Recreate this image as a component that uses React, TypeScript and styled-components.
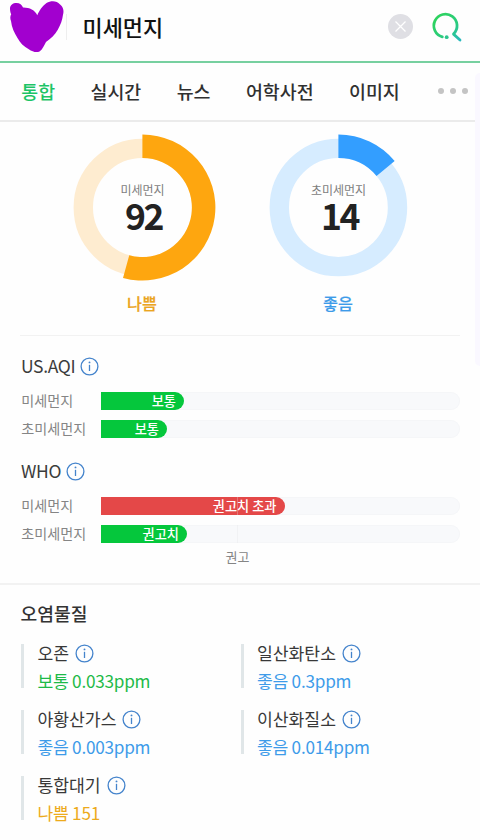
import React from "react";
import styled, { createGlobalStyle } from "styled-components";

const GlobalStyle = createGlobalStyle`
  * { box-sizing: border-box; }
  body {
    margin: 0;
    background: #fefefe;
    color: #3c3c3c;
    font-family: "Noto Sans CJK KR", sans-serif;
  }
`;

const Page = styled.main`
  position: relative;
  width: 480px;
  height: 840px;
  overflow: hidden;
  display: flex;
  flex-direction: column;
  background: #fefefe;
`;

const ScrollHandle = styled.div`
  position: absolute;
  top: 73px;
  right: 0;
  width: 5px;
  height: 293px;
  border-radius: 5px 0 0 5px;
  background: #faf8ff;
`;

const SearchBar = styled.header`
  flex: none;
  display: flex;
  align-items: center;
  height: 63px;
  padding: 0 17px 8px 9px;
  border-bottom: 2px solid #77d0a0;
`;

const HeartIcon = styled.svg`
  flex: none;
  width: 56px;
  height: 53px;
`;

const BarSeparator = styled.span`
  width: 1px;
  height: 26px;
  margin-left: 1px;
  background: #eeeeee;
`;

const Query = styled.h1`
  flex: 1;
  margin: 1px 0 0 15.5px;
  font-size: 21.9px;
  line-height: 32px;
  font-weight: 500;
  color: #111;
`;

const ClearButton = styled.button`
  width: 25px;
  height: 25px;
  padding: 0;
  border: 0;
  border-radius: 50%;
  background: #dfdfe4;
  svg { display: block; }
`;

const SearchButton = styled.button`
  width: 32px;
  height: 32px;
  margin-left: 18.5px;
  padding: 0;
  border: 0;
  background: none;
  svg { display: block; }
`;

const Tabs = styled.nav`
  flex: none;
  display: flex;
  align-items: center;
  gap: 35.4px;
  height: 59px;
  padding: 0 12.5px 2px 21.3px;
  border-bottom: 2px solid #ebebeb;
`;

const Tab = styled.a<{ $active?: boolean }>`
  font-size: 18.4px;
  line-height: 28px;
  font-weight: 500;
  white-space: nowrap;
  color: ${(p) => (p.$active ? "#1cc466" : "#303030")};
`;

const MoreDots = styled.span`
  display: flex;
  gap: 6px;
  margin-left: auto;
  i {
    width: 6px;
    height: 6px;
    border-radius: 50%;
    background: #c4c4c4;
  }
`;

const Gauges = styled.section`
  flex: none;
  display: flex;
  gap: 50px;
  height: 213px;
  padding: 12px 0 0 69px;
`;

const GaugeCard = styled.figure`
  display: flex;
  flex-direction: column;
  align-items: center;
  width: 146px;
  margin: 0;
`;

const GaugeFace = styled.div`
  display: grid;
  width: 146px;
  height: 147px;
  > * { grid-area: 1 / 1; }
`;

const GaugeText = styled.div`
  display: flex;
  flex-direction: column;
  align-items: center;
  padding-top: 47px;
`;

const GaugeName = styled.span`
  font-size: 12px;
  line-height: 18px;
  color: #7d7d7d;
`;

const GaugeValue = styled.strong`
  margin: -2px -2px 0 0;
  font-size: 35.5px;
  line-height: 36px;
  font-weight: 700;
  letter-spacing: -2.4px;
  color: #222;
`;

const GaugeGrade = styled.figcaption<{ $color: string }>`
  margin-top: 9px;
  font-size: 16.2px;
  line-height: 26px;
  font-weight: 500;
  -webkit-text-stroke: 0.2px ${(p) => p.$color};
  color: ${(p) => p.$color};
`;

const Indexes = styled.section`
  flex: none;
  height: 248px;
  margin: 0 20px;
  padding-top: 16px;
  border-top: 1px solid #f2f2f2;
`;

const IndexGroup = styled.div`
  height: 105px;
`;

const IndexTitle = styled.h2`
  display: flex;
  align-items: center;
  gap: 5px;
  height: 28px;
  margin: 0 0 12px 1px;
  font-size: 17.5px;
  font-weight: 400;
  line-height: 28px;
  letter-spacing: -0.35px;
  color: #3c3c3c;
`;

const IndexRow = styled.div`
  display: flex;
  align-items: center;
  height: 18px;
  margin-bottom: 10px;
`;

const RowLabel = styled.span`
  width: 81px;
  margin-top: -2px;
  padding-left: 1.3px;
  font-size: 14.1px;
  line-height: 18px;
  color: #858585;
  white-space: nowrap;
`;

const Track = styled.div<{ $guide?: boolean }>`
  position: relative;
  flex: 1;
  height: 18px;
  border-radius: 0 9px 9px 0;
  background: #f8f9fb;
  box-shadow: inset 0 0 0 1px #f5f6f8;
  &::after {
    content: "";
    display: ${(p) => (p.$guide ? "block" : "none")};
    position: absolute;
    top: 0;
    left: 136px;
    width: 1px;
    height: 18px;
    background: rgba(225, 225, 230, 0.3);
  }
`;

const Fill = styled.div<{ $width: number; $color: string }>`
  display: flex;
  align-items: center;
  justify-content: flex-end;
  width: ${(p) => p.$width}px;
  height: 18px;
  padding: 0 8px 1px 0;
  border-radius: 0 9px 9px 0;
  background: ${(p) => p.$color};
  color: #fff;
  font-size: 13.2px;
  line-height: 17px;
  font-weight: 500;
`;

const Guide = styled.div`
  width: 435px;
  margin-top: -15px;
  text-align: center;
  font-size: 13px;
  line-height: 20px;
  color: #858585;
`;

const Pollutants = styled.section`
  padding: 15px 20px 0 20.5px;
  border-top: 2px solid #f2f2f2;
`;

const PollutantsTitle = styled.h2`
  margin: 0 0 18px;
  font-size: 18.2px;
  line-height: 26px;
  font-weight: 500;
  color: #333;
`;

const PollutantGrid = styled.div`
  display: grid;
  grid-template-columns: 219.5px 1fr;
  row-gap: 22px;
  padding-left: 0.5px;
`;

const Pollutant = styled.div`
  height: 44px;
  padding-left: 13.4px;
  border-left: 3px solid #e0e6e8;
`;

const PollutantName = styled.div`
  display: flex;
  align-items: center;
  gap: 6px;
  height: 18px;
  margin-bottom: 9px;
  font-size: 17.2px;
  line-height: 18px;
  color: #383838;
`;

const PollutantValue = styled.div<{ $color: string }>`
  font-size: 17.2px;
  line-height: 20px;
  letter-spacing: -0.25px;
  color: ${(p) => p.$color};
`;

const InfoSvg = styled.svg`
  flex: none;
  display: block;
  width: 19px;
  height: 19px;
`;

const InfoIcon = () => (
  <InfoSvg viewBox="0 0 19 19">
    <circle cx="9.5" cy="9.5" r="8.4" fill="none" stroke="#4584cc" strokeWidth="1.3" />
    <circle cx="9.5" cy="5.4" r="0.95" fill="#4584cc" />
    <path d="M9.5 7.8V14" stroke="#4584cc" strokeWidth="1.3" />
  </InfoSvg>
);

interface GaugeProps {
  name: string;
  value: number;
  grade: string;
  sweep: number;
  color: string;
  pale: string;
  gradeColor: string;
}

const CX = 73.4;
const CY = 73.5;
const OUTER = 73;
const INNER = 49.5;

const point = (r: number, deg: number) => {
  const a = (deg * Math.PI) / 180;
  return `${(CX + r * Math.sin(a)).toFixed(2)} ${(CY - r * Math.cos(a)).toFixed(2)}`;
};

const sector = (sweep: number) => {
  const large = sweep > 180 ? 1 : 0;
  return `M${point(OUTER, 0)}A${OUTER} ${OUTER} 0 ${large} 1 ${point(OUTER, sweep)}L${point(INNER, sweep)}A${INNER} ${INNER} 0 ${large} 0 ${point(INNER, 0)}Z`;
};

const Gauge = ({ name, value, grade, sweep, color, pale, gradeColor }: GaugeProps) => (
  <GaugeCard>
    <GaugeFace>
      <svg width="147" height="147" viewBox="0 0 147 147">
        <circle cx={CX} cy={CY} r="59.1" fill="none" stroke={pale} strokeWidth="19.4" />
        <path d={sector(sweep)} fill={color} />
      </svg>
      <GaugeText>
        <GaugeName>{name}</GaugeName>
        <GaugeValue>{value}</GaugeValue>
      </GaugeText>
    </GaugeFace>
    <GaugeGrade $color={gradeColor}>{grade}</GaugeGrade>
  </GaugeCard>
);

interface BarProps {
  label: string;
  text: string;
  width: number;
  color: string;
  guide?: boolean;
}

const Bar = ({ label, text, width, color, guide }: BarProps) => (
  <IndexRow>
    <RowLabel>{label}</RowLabel>
    <Track $guide={guide}>
      <Fill $width={width} $color={color}>{text}</Fill>
    </Track>
  </IndexRow>
);

const GREEN = "#05c73c";
const RED = "#e44848";
const BLUE = "#3d9be9";

const pollutants = [
  { name: "오존", value: "보통 0.033ppm", color: "#1dba48" },
  { name: "일산화탄소", value: "좋음 0.3ppm", color: BLUE },
  { name: "아황산가스", value: "좋음 0.003ppm", color: BLUE },
  { name: "이산화질소", value: "좋음 0.014ppm", color: BLUE },
  { name: "통합대기", value: "나쁨 151", color: "#edaa1c" },
];

export default function App() {
  return (
    <>
      <GlobalStyle />
      <Page>
        <SearchBar>
          <HeartIcon viewBox="0 0 56 53">
            <path
              fill="#a200cf"
              d="M1 8.5C1 5 4 3 7.5 3C10.8 3 13 4.8 14 7.5C20 7.3 26 10 28.3 15.2C30 11 33.5 5.8 37.5 3C42 .5 48 .7 50.8 4.3C54 6.8 55.3 10.5 54 14.8C53.4 20 51.5 25 48.8 29.8C46 35 42 38.5 37 42C35 45.5 33.6 49.5 30.5 51.5C27 53 23.3 51.4 19.8 49.2C15 46.8 10.8 42.5 8.5 38C5.3 33 2.6 27 2 21C1 18.5 1.1 16.2 2.2 14.2C1.4 12.7 1 10.6 1 8.5Z"
            />
          </HeartIcon>
          <BarSeparator />
          <Query>미세먼지</Query>
          <ClearButton aria-label="지우기">
            <svg width="25" height="25" viewBox="0 0 25 25">
              <path d="M7.5 7.5L17.5 17.5M17.5 7.5L7.5 17.5" stroke="#fff" strokeWidth="1.3" />
            </svg>
          </ClearButton>
          <SearchButton aria-label="검색">
            <svg width="32" height="32" viewBox="0 0 32 32" fill="none">
              <defs>
                <linearGradient id="lens" gradientUnits="userSpaceOnUse" x1="5" y1="5" x2="29" y2="29">
                  <stop offset="0" stopColor="#2dd35c" />
                  <stop offset="0.6" stopColor="#2bcb80" />
                  <stop offset="1" stopColor="#29b9bd" />
                </linearGradient>
              </defs>
              <path
                d="M11.3 25.9A11.6 11.6 0 1 1 22.5 23.1L29 29"
                stroke="url(#lens)"
                strokeWidth="2.8"
                strokeLinejoin="round"
                strokeLinecap="round"
              />
              <circle cx="15.7" cy="26.2" r="1.9" fill="#2bc58d" />
            </svg>
          </SearchButton>
        </SearchBar>

        <Tabs>
          <Tab $active>통합</Tab>
          <Tab>실시간</Tab>
          <Tab>뉴스</Tab>
          <Tab>어학사전</Tab>
          <Tab>이미지</Tab>
          <MoreDots><i /><i /><i /></MoreDots>
        </Tabs>

        <Gauges>
          <Gauge name="미세먼지" value={92} grade="나쁨" sweep={195.4} color="#fea60f" pale="#feecd0" gradeColor="#eba51f" />
          <Gauge name="초미세먼지" value={14} grade="좋음" sweep={50.4} color="#339eff" pale="#d6ecff" gradeColor="#3d9be9" />
        </Gauges>

        <Indexes>
          <IndexGroup>
            <IndexTitle>US.AQI <InfoIcon /></IndexTitle>
            <Bar label="미세먼지" text="보통" width={83} color={GREEN} />
            <Bar label="초미세먼지" text="보통" width={66} color={GREEN} />
          </IndexGroup>
          <IndexGroup>
            <IndexTitle>WHO <InfoIcon /></IndexTitle>
            <Bar label="미세먼지" text="권고치 초과" width={183.5} color={RED} guide />
            <Bar label="초미세먼지" text="권고치" width={86} color={GREEN} guide />
          </IndexGroup>
          <Guide>권고</Guide>
        </Indexes>

        <Pollutants>
          <PollutantsTitle>오염물질</PollutantsTitle>
          <PollutantGrid>
            {pollutants.map((p) => (
              <Pollutant key={p.name}>
                <PollutantName>{p.name} <InfoIcon /></PollutantName>
                <PollutantValue $color={p.color}>{p.value}</PollutantValue>
              </Pollutant>
            ))}
          </PollutantGrid>
        </Pollutants>
        <ScrollHandle />
      </Page>
    </>
  );
}
